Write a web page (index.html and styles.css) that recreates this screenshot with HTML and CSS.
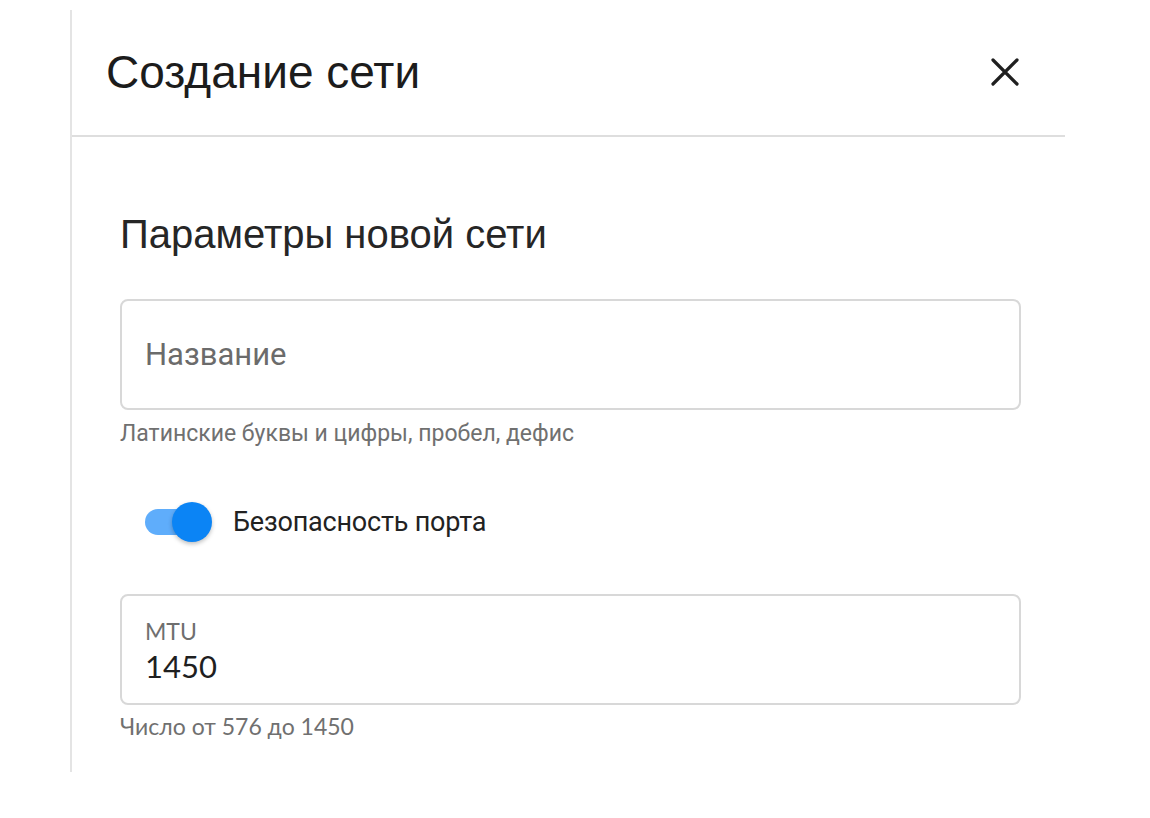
FILE: index.html
```html
<!DOCTYPE html>
<html lang="ru">
<head>
    <meta charset="UTF-8">
    <meta name="viewport" content="width=device-width, initial-scale=1.0">
    <title>Создание сети</title>
    <link rel="stylesheet" href="styles.css">
</head>
<body>
    <div class="panel">
        <div class="header">
            <h1>Создание сети</h1>
            <button class="close-btn" aria-label="Закрыть">
                <svg width="30" height="30" viewBox="0 0 30 30">
                    <path d="M3 3 L27 27 M27 3 L3 27" stroke="#1f1f1f" stroke-width="3.2" stroke-linecap="round"/>
                </svg>
            </button>
        </div>

        <div class="content">
            <h2>Параметры новой сети</h2>

            <div class="field">
                <div class="field-box">
                    <span class="placeholder">Название</span>
                </div>
                <p class="hint hint-roboto">Латинские буквы и цифры, пробел, дефис</p>
            </div>

            <label class="switch-row">
                <span class="switch">
                    <span class="switch-track"></span>
                    <span class="switch-knob"></span>
                </span>
                <span class="switch-label">Безопасность порта</span>
            </label>

            <div class="field">
                <div class="field-box filled">
                    <span class="field-label">MTU</span>
                    <span class="field-value">1450</span>
                </div>
                <p class="hint hint-lato">Число от 576 до 1450</p>
            </div>
        </div>
    </div>
</body>
</html>
```

FILE: styles.css
```css
* {
    box-sizing: border-box;
    margin: 0;
    padding: 0;
}
body {
    background-color: #fff;
    color: #1f1f1f;
    font-family: "Liberation Sans", Arial, sans-serif;
}
.panel {
    margin: 10px 0 0 70px;
    width: 995px;
    height: 762px;
    border-left: 2px solid #e4e4e4;
}
.header {
    display: flex;
    justify-content: space-between;
    align-items: center;
    height: 127px;
    padding: 0 45px 0 34px;
    border-bottom: 2px solid #dedede;
}
.header h1 {
    font-size: 46px;
    font-weight: normal;
    color: #1c1c1c;
    margin-top: -2px;
}
.close-btn {
    background: none;
    border: none;
    width: 30px;
    height: 30px;
    cursor: pointer;
    margin-top: -2px;
}
.content {
    padding: 75px 44px 0 48px;
}
.content h2 {
    font-size: 40px;
    font-weight: normal;
    color: #262626;
    margin-bottom: 42px;
}
.field-box {
    height: 111px;
    border: 2px solid #d8d8d8;
    border-radius: 8px;
    padding: 0 23px;
    display: flex;
    align-items: center;
}
.placeholder {
    font-family: Roboto, sans-serif;
    font-size: 31px;
    color: #6b6b6b;
}
.hint {
    color: #707070;
}
.hint-roboto {
    font-family: Roboto, sans-serif;
    font-size: 23px;
    margin-top: 10px;
}
.hint-lato {
    font-family: Lato, sans-serif;
    font-size: 23px;
    margin-top: 7px;
}
.switch-row {
    display: flex;
    align-items: center;
    gap: 21px;
    margin: 55px 0 52px 25px;
}
.switch {
    position: relative;
    width: 67px;
    height: 40px;
}
.switch-track {
    position: absolute;
    left: 0;
    top: 7px;
    width: 56px;
    height: 26px;
    border-radius: 13px;
    background-color: #5fadfb;
}
.switch-knob {
    position: absolute;
    left: 27px;
    top: 0;
    width: 40px;
    height: 40px;
    border-radius: 50%;
    background-color: #0b84f5;
    box-shadow: 0 2px 4px rgba(0, 0, 0, 0.25);
}
.switch-label {
    font-family: Roboto, sans-serif;
    font-size: 27px;
    color: #222;
    letter-spacing: -0.2px;
}
.field-box.filled {
    flex-direction: column;
    align-items: flex-start;
    justify-content: flex-start;
    padding-top: 22px;
    gap: 4px;
}
.field-label {
    font-family: Lato, sans-serif;
    font-size: 23px;
    color: #6f6f6f;
    line-height: 26px;
}
.field-value {
    font-family: Lato, sans-serif;
    font-size: 31px;
    color: #1f1f1f;
    line-height: 36px;
}
```
